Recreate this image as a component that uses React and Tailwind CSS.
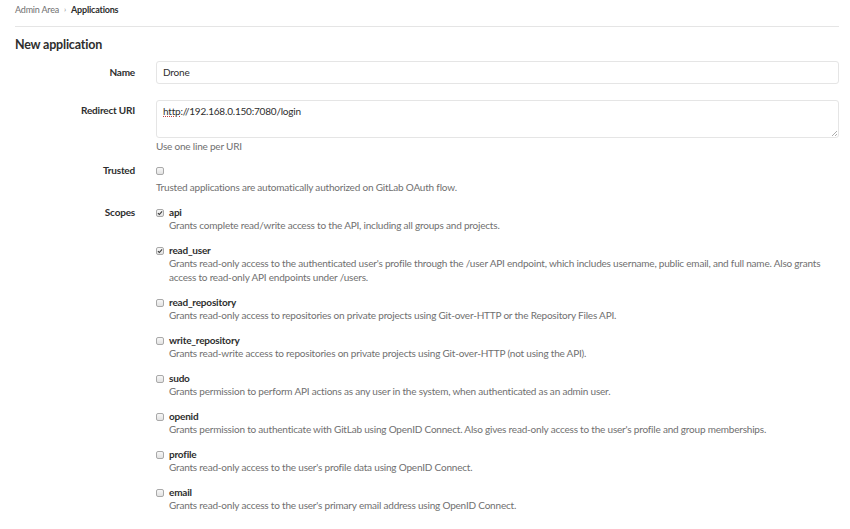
import React from 'react'

const scopes = [
  { name: 'api', checked: true, desc: 'Grants complete read/write access to the API, including all groups and projects.' },
  { name: 'read_user', checked: true, desc: "Grants read-only access to the authenticated user's profile through the /user API endpoint, which includes username, public email, and full name. Also grants access to read-only API endpoints under /users." },
  { name: 'read_repository', desc: 'Grants read-only access to repositories on private projects using Git-over-HTTP or the Repository Files API.' },
  { name: 'write_repository', desc: 'Grants read-write access to repositories on private projects using Git-over-HTTP (not using the API).' },
  { name: 'sudo', desc: 'Grants permission to perform API actions as any user in the system, when authenticated as an admin user.' },
  { name: 'openid', desc: "Grants permission to authenticate with GitLab using OpenID Connect. Also gives read-only access to the user's profile and group memberships." },
  { name: 'profile', desc: "Grants read-only access to the user's profile data using OpenID Connect." },
  { name: 'email', desc: "Grants read-only access to the user's primary email address using OpenID Connect." },
]

const Box = ({ checked }) => (
  <span className="mt-[3px] flex h-[8px] w-[8px] shrink-0 items-center justify-center rounded-[2px] border border-[#a9a9a9] bg-gradient-to-b from-[#f7f7f7] to-[#e2e2e2]">
    {checked && (
      <svg viewBox="0 0 8 8" className="h-[6px] w-[6px]">
        <path d="M1.2 4.2 L3.1 6 L6.8 1.8" fill="none" stroke="#3b3b3b" strokeWidth="1.5" />
      </svg>
    )}
  </span>
)

const Row = ({ label, children, labelTop = 'pt-[5px]' }) => (
  <div className="flex">
    <div className={`w-[120px] shrink-0 text-right font-bold text-[#2e2e2e] ${labelTop}`}>{label}</div>
    <div className="ml-[21px] flex-1">{children}</div>
  </div>
)

export default function App() {
  return (
    <div className="min-h-screen bg-white pl-[15px] pr-[11px] text-[10px] leading-[13px] tracking-[-0.2px] text-[#2e2e2e]" style={{ fontFamily: 'Lato, "Noto Sans", sans-serif' }}>
      <div className="flex items-center gap-[5px] border-b border-[#e5e5e5] pt-[3px] pb-[10px] text-[9px]">
        <span className="text-[#707070]">Admin Area</span>
        <span className="text-[8px] text-[#909090]">›</span>
        <span className="font-bold text-[#2e2e2e]">Applications</span>
      </div>

      <h3 className="mt-[9px] mb-[7px] text-[12.5px] font-bold leading-[18px] text-[#2e2e2e]">New application</h3>

      <div className="flex flex-col">
        <Row label="Name">
          <div className="flex h-[23px] items-center rounded-[3px] border border-[#e5e5e5] px-[6px]">Drone</div>
        </Row>

        <div className="mt-[16px]">
          <Row label="Redirect URI" labelTop="pt-[4px]">
            <div className="relative h-[38px] rounded-[3px] border border-[#e5e5e5] px-[6px] pt-[4px]">
              <span className="underline decoration-dotted decoration-[#c04040]">http</span>://192.168.0.150:7080/login
              <svg viewBox="0 0 6 6" className="absolute right-[1px] bottom-[1px] h-[6px] w-[6px]">
                <path d="M6 1 L1 6 M6 4 L4 6" stroke="#999" strokeWidth="0.8" />
              </svg>
            </div>
            <p className="mt-[2px] text-[#707070]">Use one line per URI</p>
          </Row>
        </div>

        <div className="mt-[11px]">
          <Row label="Trusted" labelTop="pt-0">
            <Box />
            <p className="mt-[6px] text-[#707070]">Trusted applications are automatically authorized on GitLab OAuth flow.</p>
          </Row>
        </div>

        <div className="mt-[12px]">
          <Row label="Scopes" labelTop="pt-0">
            <div className="flex flex-col gap-[11.5px]">
              {scopes.map((s) => (
                <div key={s.name} className="flex gap-[5px]">
                  <Box checked={s.checked} />
                  <div>
                    <div className="font-bold text-[#2e2e2e]">{s.name}</div>
                    <div className="leading-[13.5px] text-[#707070]">{s.desc}</div>
                  </div>
                </div>
              ))}
            </div>
          </Row>
        </div>
      </div>
    </div>
  )
}
